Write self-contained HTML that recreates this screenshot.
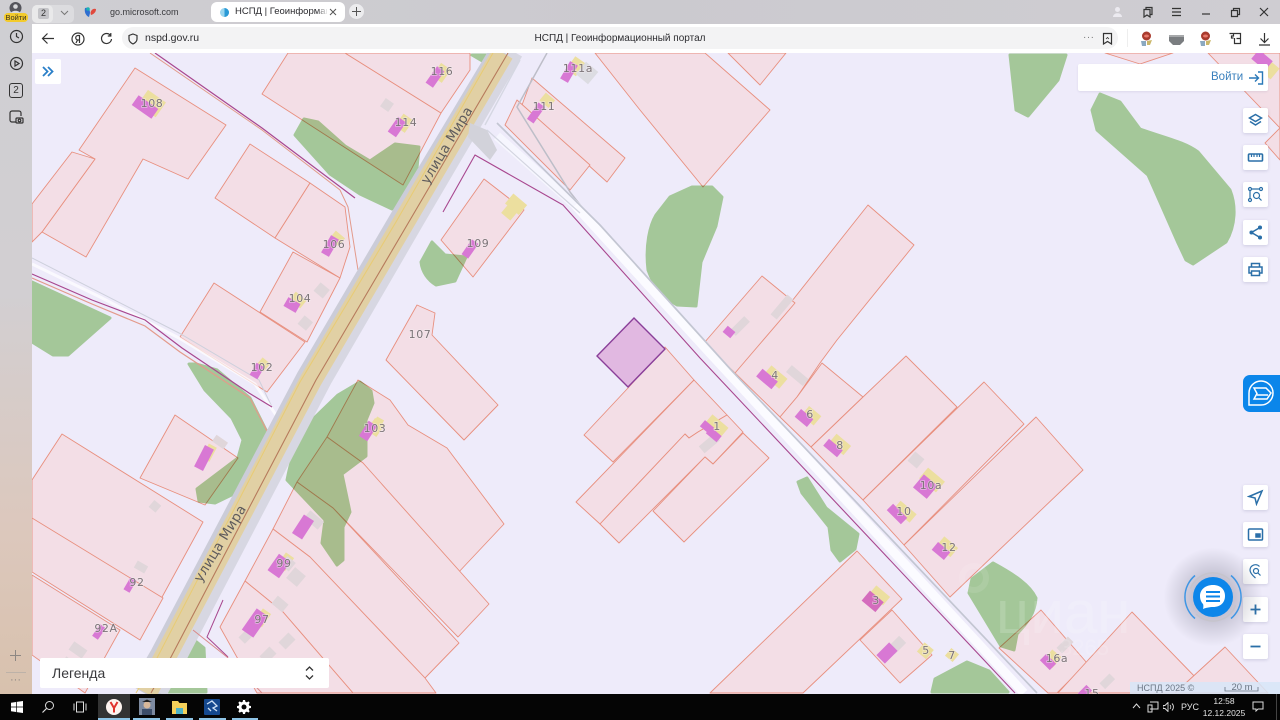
<!DOCTYPE html>
<html lang="ru"><head><meta charset="utf-8"><title>НСПД | Геоинформационный портал</title>
<style>
*{box-sizing:border-box}
html,body{margin:0;padding:0;width:1280px;height:720px;overflow:hidden;background:#eeebfa;font-family:"Liberation Sans","Noto Sans CJK SC",sans-serif}
.a{position:absolute}
.btn{position:absolute;left:1243px;width:25px;height:25px;background:#fff;border-radius:2px;box-shadow:0 1px 3px rgba(60,60,110,.18)}
.btn svg{position:absolute;left:4px;top:4px;width:17px;height:17px;fill:none;stroke:#2a6fa8;stroke-width:1.5}
.ic{position:absolute;fill:none;stroke:#333;stroke-width:1.2}
.lb text{font:11px "DejaVu Sans",sans-serif;fill:#7c7478;text-anchor:middle;letter-spacing:.6px;stroke:#f6eef2;stroke-width:1.5px;stroke-opacity:.55;paint-order:stroke}
.bar{position:absolute;top:718px;height:2px;background:#8ec4e6}
</style></head><body>

<svg class="a" style="left:32px;top:53px" width="1248" height="641" viewBox="32 53 1248 641">
<rect x="32" y="53" width="1248" height="641" fill="#eeebfa"/>

<g fill="#f3dee6" stroke="#e88f7e" stroke-width=".9" stroke-linejoin="round">
<polygon points="135,68 226,125 188,179 143,159 86,257 42,232 95,159 79,150"/>
<polygon points="32,204 72,152 95,159 42,232 32,242"/>
<polygon points="288,53 345,53 441,113 403,185 262,94"/>
<polygon points="345,53 470,53 470,70 441,113"/>
<polygon points="250,144 310,183 275,238 215,198"/>
<polygon points="310,183 345,207 350,247 340,278 275,238"/>
<polygon points="293,252 340,278 307,342 260,312"/>
<polygon points="214,283 305,342 267,392 180,337"/>
<polygon points="484,179 524,210 473,277 441,240"/>
<polygon points="417,305 435,313 432,335 498,405 464,440 386,360"/>
<polygon points="532,78 625,158 607,182 522,105"/>
<polygon points="517,100 590,165 570,190 505,125"/>
<polygon points="595,53 705,53 770,110 703,187 640,110"/>
<polygon points="728,53 786,53 760,85"/>
<polygon points="1105,53 1173,53 1140,64"/>
<polygon points="1208,53 1280,53 1280,128"/>
<polygon points="1280,128 1265,143 1280,160"/>
<polygon points="868,205 914,245 837,340 820,363 797,397 780,417 735,373"/>
<polygon points="762,276 795,303 735,373 704,343"/>
<polygon points="822,363 863,397 811,447 780,417 797,397"/>
<polygon points="906,356 957,407 863,500 811,447 863,397"/>
<polygon points="984,382 1024,424 904,545 863,500"/>
<polygon points="1036,417 1083,470 950,597 904,545"/>
<polygon points="857,551 902,599 803,693 710,693"/>
<polygon points="892,610 932,655 900,683 860,640"/>
<polygon points="1041,610 1087,663 1057,693 1048,693 999,648"/>
<polygon points="1132,612 1200,682 1192,693 1058,693"/>
<polygon points="1225,647 1268,693 1175,693"/>
<polygon points="665,347 694,380 613,462 584,435 628,388"/>
<polygon points="694,380 727,415 698,432 689,438 685,434 600,524 576,502"/>
<polygon points="727,415 743,432 713,464 705,457 619,543 600,524 685,434 689,438 698,432"/>
<polygon points="743,433 769,458 684,542 653,511 705,457 713,464"/>
<polygon points="62,434 203,522 155,610 32,520 32,480"/>
<polygon points="175,415 238,458 205,505 140,478"/>
<polygon points="32,518 163,598 140,640 32,572"/>
<polygon points="32,575 120,630 85,693 32,655"/>
<polygon points="358,380 390,400 408,425 447,448 504,524 456,575 363,463 327,437"/>
<polygon points="327,437 363,463 489,604 458,637 333,508 297,482"/>
<polygon points="297,482 333,508 459,643 425,678 310,557 273,529"/>
<polygon points="273,529 310,557 425,678 436,693 353,693 283,612 245,581"/>
<polygon points="245,581 283,612 353,693 257,693 220,627"/>
</g>

<g fill="#b0d89c" stroke="#b0d89c" stroke-width="3" stroke-linejoin="round" style="mix-blend-mode:multiply">
<polygon points="1010,55 1066,55 1058,80 1028,116 1016,110"/>
<path d="M1100 94 L1120 102 L1140 129 C1165 138 1185 142 1198 152 L1230 190 C1236 205 1236 225 1226 242 L1193 264 L1186 260 L1178 243 L1148 175 L1097 130 L1092 110Z"/>
<path d="M692 187 L712 187 L722 197 L716 226 L701 262 L696 306 L677 305 C665 298 655 290 648 270 C645 245 650 225 656 215 L670 197Z"/>
<path d="M432 242 L445 255 L466 257 L455 281 L436 285 C428 280 422 272 421 262Z"/>
<path d="M304 119 L318 122 L345 146 L370 161 L395 144 L419 147 L415 189 L392 209 L360 194 L330 174 L295 135Z"/>
<polygon points="32,282 110,318 68,355 53,355 32,342"/>
<path d="M189 364 L196 364 L217 370 L250 398 L267 432 L257 469 L246 488 L215 503 L199 501 L197 489 L238 458 L243 440 L232 418 L205 390Z"/>
<path d="M360 382 L371 391 L373 403 L366 420 L366 456 L342 474 L350 512 L343 527 L343 560 L337 565 L322 543 L325 520 L287 480 C292 455 298 435 309 423 L338 395Z"/>
<path d="M798 482 L807 478 L826 508 L858 534 L855 549 L840 561 L832 550 L829 527 L802 493Z"/>
<path d="M972 579 L993 563 C1015 575 1030 585 1036 598 C1035 615 1025 625 1017 634 L1014 650 L1001 646 L969 593Z"/>
<path d="M932 692 L935 679 L967 662 L989 671 L1008 692Z"/>
<path d="M179 658 L193 639 L204 648 L206 692 L162 692Z"/>
<polygon points="472,55 490,55 484,62"/>
</g>

<!-- purple lot -->
<polygon points="634,318 665,349 628,387 597,356" fill="#e1b8e1" stroke="#8a3f99" stroke-width="1.4"/>

<!-- upper left lines -->
<g fill="none">
<path d="M150 53 L262 130 L340 190 L348 207 L358 270" stroke="#e39a8b" stroke-width="1"/>
<path d="M155 53 L262 128 L355 198" stroke="#a8478f" stroke-width="1.2"/>
<path d="M32 258 L179 333 L259 380 L272 407" stroke="#cdd0dc" stroke-width="1"/>
<path d="M32 264 L100 297 L179 338 L255 384 L276 415" stroke="#fff" stroke-width="3" opacity=".7"/>
<path d="M32 274 L92 300 L145 320 L182 348 L249 393 L272 407" stroke="#a8478f" stroke-width="1.2"/>
<path d="M32 278 L92 304 L145 326 L180 352 L250 398 L270 437 L266 445" stroke="#e39a8b" stroke-width="1.2"/>
</g>

<!-- main road -->
<g fill="none">
<path d="M505 53 L405 220 L311 380 L165 657 L144 693" stroke="#cbccd8" stroke-width="31"/>
<path d="M516 53 L418 220 L325 380 L180 657 L160 693" stroke="#d7d7e2" stroke-width="14"/>
<path d="M503 53 L405 220 L311 380 L165 657 L146 693" stroke="#e1d0a4" stroke-width="22"/>
<path d="M493 53 L396 222 L300 382 L156 660 L136 693" stroke="#e8cb74" stroke-width="1"/>
<path d="M508 53 L410 220 L316 380 L171 657 L151 693" stroke="#b67a5c" stroke-width="1.1"/>
</g>
<polygon points="470,123 487,130 497,150 490,160 468,137" fill="#d2d2da"/>

<!-- diagonal service road -->
<g fill="none" stroke-linejoin="round">
<path d="M547 53 L517 107 L570 192 L592 220" stroke="#bdbec8" stroke-width="1.500"/>
<path d="M497 136 L575 205" stroke="#f6f6fe" stroke-width="9"/>
<path d="M575 205 L707 350 L1024 693" stroke="#fbfbff" stroke-width="9"/>
<path d="M487 130 L580 213" stroke="#d3d5e0" stroke-width="1.200"/>
<path d="M497 123 L600 225 L733 372 L1037 693" stroke="#c3c6d2" stroke-width="1.700"/>
<path d="M443 212 L475 155 L563 205 L700 358 L1015 693" stroke="#a8478f" stroke-width="1.100"/>
<path d="M520 60 L485 125" stroke="#d5d7e2" stroke-width="1.400"/>
<path d="M223 600 L207 637 L228 657" stroke="#a8478f" stroke-width="1"/>
<path d="M193 630 L227 657 L262 693" stroke="#d98a8a" stroke-width="1"/>
</g>

<!-- building footprints -->
<g fill="#ecdf9f">
<rect x="-10" y="-9" width="22" height="18" transform="translate(151,103) rotate(35)"/>
<rect x="-9" y="-6" width="16" height="12" transform="translate(442,72) rotate(-55)"/>
<rect x="-9" y="-6" width="15" height="12" transform="translate(405,122) rotate(-55)"/>
<rect x="-7" y="-5" width="12" height="10" transform="translate(548,101) rotate(40)"/>
<rect x="-9" y="-7" width="16" height="12" transform="translate(577,66) rotate(-55)"/>
<rect x="-7" y="-5" width="12" height="10" transform="translate(338,239) rotate(40)"/>
<rect x="-8" y="-7" width="18" height="13" transform="translate(515,204) rotate(40)"/>
<rect x="-7" y="-5" width="12" height="12" transform="translate(511,212) rotate(40)"/>
<rect x="-7" y="-5" width="14" height="10" transform="translate(298,300) rotate(40)"/>
<rect x="-6" y="-5" width="10" height="10" transform="translate(264,365) rotate(40)"/>
<rect x="-8" y="-6" width="15" height="12" transform="translate(376,427) rotate(-55)"/>
<rect x="-11" y="-6" width="21" height="11" transform="translate(717,426) rotate(40)"/>
<rect x="-11" y="-6" width="21" height="13" transform="translate(776,377) rotate(40)"/>
<rect x="-8" y="-5" width="16" height="12" transform="translate(812,415) rotate(40)"/>
<rect x="-10" y="-5" width="19" height="12" transform="translate(841,444) rotate(40)"/>
<rect x="-11" y="-7" width="22" height="14" transform="translate(932,480) rotate(40)"/>
<rect x="-10" y="-5" width="21" height="11" transform="translate(905,511) rotate(40)"/>
<rect x="-9" y="-5" width="18" height="12" transform="translate(948,546) rotate(40)"/>
<rect x="-9" y="-5" width="18" height="11" transform="translate(880,595) rotate(40)"/>
<rect x="-6" y="-5" width="12" height="12" transform="translate(926,650) rotate(40)"/>
<rect x="-5" y="-5" width="10" height="10" transform="translate(952,655) rotate(40)"/>
<rect x="-6" y="-6" width="12" height="14" transform="translate(1053,658) rotate(40)"/>
<rect x="-9" y="-5" width="16" height="9" transform="translate(210,452) rotate(-62)"/>
<rect x="-7" y="-5" width="14" height="8" transform="translate(378,425) rotate(-60)"/>
<rect x="-9" y="-5" width="16" height="10" transform="translate(286,561) rotate(-55)"/>
<rect x="-9" y="-5" width="16" height="10" transform="translate(263,617) rotate(-55)"/>
<rect x="-9" y="-5" width="16" height="14" transform="translate(1271,68) rotate(40)"/>
</g>
<g fill="#e0d6da">
<rect x="-5" y="-5" width="10" height="10" transform="translate(387,105) rotate(35)"/>
<rect x="-8" y="-8" width="16" height="16" fill="#dcdce2" transform="translate(587,73) rotate(40)"/>
<rect x="-10" y="-4" width="20" height="8" transform="translate(740,326) rotate(-45)"/>
<rect x="-13" y="-4" width="26" height="8" transform="translate(782,307) rotate(-50)"/>
<rect x="-11" y="-5" width="22" height="9" transform="translate(797,376) rotate(40)"/>
<rect x="-6" y="-6" width="12" height="12" transform="translate(916,460) rotate(40)"/>
<rect x="-10" y="-4" width="20" height="9" transform="translate(709,443) rotate(-40)"/>
<rect x="-6" y="-5" width="12" height="11" transform="translate(322,290) rotate(40)"/>
<rect x="-6" y="-5" width="11" height="11" transform="translate(306,323) rotate(40)"/>
<rect x="-7" y="-4" width="14" height="8" transform="translate(220,442) rotate(35)"/>
<rect x="-5" y="-5" width="9" height="9" transform="translate(155,507) rotate(40)"/>
<rect x="-6" y="-4" width="12" height="8" transform="translate(141,567) rotate(30)"/>
<rect x="-5" y="-9" width="10" height="18" transform="translate(314,520) rotate(-50)"/>
<rect x="-7" y="-7" width="14" height="14" transform="translate(296,577) rotate(40)"/>
<rect x="-5" y="-5" width="11" height="11" transform="translate(288,563) rotate(40)"/>
<rect x="-7" y="-5" width="14" height="10" transform="translate(280,604) rotate(40)"/>
<rect x="-7" y="-5" width="14" height="10" transform="translate(287,641) rotate(-45)"/>
<rect x="-7" y="-5" width="14" height="9" transform="translate(247,636) rotate(-45)"/>
<rect x="-7" y="-5" width="14" height="10" transform="translate(268,655) rotate(-45)"/>
<rect x="-8" y="-5" width="16" height="10" transform="translate(897,645) rotate(-45)"/>
<rect x="-8" y="-4" width="16" height="8" transform="translate(1065,645) rotate(-45)"/>
<rect x="-7" y="-5" width="14" height="8" transform="translate(1108,682) rotate(-45)"/>
<rect x="-8" y="-5" width="16" height="10" transform="translate(78,650) rotate(35)"/>
<rect x="-8" y="-5" width="16" height="10" transform="translate(70,665) rotate(35)"/>
</g>
<g fill="#d878d4">
<rect x="-12" y="-6" width="24" height="12" transform="translate(145,107) rotate(35)"/>
<rect x="-10" y="-4.5" width="20" height="9" transform="translate(435,77) rotate(-55)"/>
<rect x="-9" y="-5" width="18" height="10" transform="translate(397,127) rotate(-55)"/>
<rect x="-10" y="-4" width="20" height="8" transform="translate(536,113) rotate(-55)"/>
<rect x="-10" y="-4.5" width="20" height="9" transform="translate(569,72) rotate(-60)"/>
<rect x="-10" y="-4.5" width="20" height="9" transform="translate(330,246) rotate(-60)"/>
<rect x="-9" y="-4" width="18" height="8" transform="translate(470,249) rotate(-55)"/>
<rect x="-7" y="-5" width="14" height="10" transform="translate(292,305) rotate(30)"/>
<rect x="-7" y="-4.5" width="14" height="9" transform="translate(257,371) rotate(-60)"/>
<rect x="-9" y="-5" width="18" height="10" transform="translate(368,431) rotate(-57)"/>
<rect x="-6" y="-4" width="12" height="8" transform="translate(707,427) rotate(40)"/>
<rect x="-6" y="-4" width="14" height="8" transform="translate(713,434) rotate(40)"/>
<rect x="-5" y="-4" width="10" height="8" transform="translate(729,332) rotate(40)"/>
<rect x="-10" y="-5" width="20" height="10" transform="translate(767,379) rotate(40)"/>
<rect x="-8" y="-5" width="16" height="10" transform="translate(804,418) rotate(40)"/>
<rect x="-9" y="-4.5" width="18" height="9" transform="translate(833,448) rotate(40)"/>
<rect x="-9" y="-9" width="18" height="17" transform="translate(925,487) rotate(40)"/>
<rect x="-10" y="-4.5" width="20" height="9" transform="translate(897,514) rotate(45)"/>
<rect x="-8" y="-5" width="16" height="10" transform="translate(941,551) rotate(40)"/>
<rect x="-9" y="-6" width="18" height="13" fill="#d46cbd" transform="translate(873,601) rotate(40)"/>
<rect x="-9" y="-6" width="18" height="12" transform="translate(887,653) rotate(-45)"/>
<rect x="-7" y="-4.5" width="14" height="9" transform="translate(1048,662) rotate(45)"/>
<rect x="-12" y="-5" width="24" height="10" transform="translate(204,458) rotate(-63)"/>
<rect x="-11" y="-6" width="22" height="12" transform="translate(303,527) rotate(-57)"/>
<rect x="-10" y="-7" width="20" height="14" transform="translate(279,566) rotate(-55)"/>
<rect x="-13" y="-7" width="26" height="14" transform="translate(255,623) rotate(-55)"/>
<rect x="-7" y="-3.5" width="14" height="7" transform="translate(130,585) rotate(-60)"/>
<rect x="-7" y="-3.5" width="14" height="7" transform="translate(99,632) rotate(-55)"/>
<rect x="-9" y="-6" width="18" height="12" transform="translate(1262,60) rotate(40)"/>
<rect x="-6" y="-4" width="12" height="8" transform="translate(1085,692) rotate(-45)"/>
</g>

<g class="lb">
<text x="152" y="107">108</text><text x="442" y="75">116</text><text x="406" y="126">114</text>
<text x="544" y="110">111</text><text x="578" y="72">111а</text><text x="334" y="248">106</text>
<text x="478" y="247">109</text><text x="300" y="302">104</text><text x="262" y="371">102</text>
<text x="420" y="338">107</text><text x="375" y="432">103</text><text x="717" y="430">1</text>
<text x="775" y="379">4</text><text x="810" y="418">6</text><text x="840" y="449">8</text>
<text x="931" y="489">10а</text><text x="904" y="515">10</text><text x="949" y="551">12</text>
<text x="876" y="604">3</text><text x="926" y="654">5</text><text x="952" y="659">7</text>
<text x="1057" y="662">16а</text><text x="1092" y="697">15</text><text x="137" y="586">92</text>
<text x="106" y="632">92А</text><text x="284" y="567">99</text><text x="262" y="623">97</text>
</g>

<g font-family="DejaVu Sans,sans-serif" font-size="13.5" fill="#5e5b5c" letter-spacing=".3">
<text transform="translate(428,185) rotate(-59)">улица Мира</text>
<text transform="translate(201,583) rotate(-58.600)">улица Мира</text>
</g>

<text x="996" y="633" font-family="Liberation Sans,sans-serif" font-size="60" fill="#fff" opacity=".16">циан</text>
<text x="1060" y="655" font-family="Liberation Sans,sans-serif" font-size="22" fill="#fff" opacity=".14">3265</text>
<circle cx="974" cy="578" r="12" fill="none" stroke="#fff" stroke-width="6" opacity=".1"/>

<rect x="1130" y="682" width="150" height="12" fill="#d7e6f7" opacity=".85"/>
<text x="1137" y="691" font-family="Liberation Sans,sans-serif" font-size="9" fill="#6b7684">НСПД 2025 ©</text>
<text x="1242" y="690" text-anchor="middle" font-family="Liberation Sans,sans-serif" font-size="9.500" fill="#6b7684">20 m</text>
<path d="M1225 687 V691 H1258 V687" fill="none" stroke="#6b7684" stroke-width=".8"/>
</svg>

<!-- browser top -->
<div class="a" style="left:0;top:0;width:1280px;height:24px;background:linear-gradient(90deg,#cfced2,#cbcacf 50%,#cfcdd2)"></div>
<div class="a" style="left:32px;top:24px;width:1248px;height:29px;background:#fff"></div>
<div class="a" style="left:0;top:24px;width:32px;height:670px;background:linear-gradient(180deg,#cfcfd3 0%,#d2cfd2 40%,#dcc8bd 75%,#d8c1ad 100%)"></div>

<!-- profile -->
<svg class="a" style="left:8px;top:2px" width="15" height="13" viewBox="0 0 15 13"><circle cx="7.500" cy="6" r="6" fill="#55555c"/><circle cx="7.500" cy="4.500" r="2.300" fill="#d9d9dc"/><path d="M3 11c1-3 8-3 9 0" fill="#d9d9dc"/></svg>
<div class="a" style="left:4px;top:13px;width:24px;height:9px;border-radius:4px;background:#f3cb2c;font-size:7.500px;line-height:9px;text-align:center;color:#3a3220">Войти</div>

<!-- tabs -->
<div class="a" style="left:32px;top:5px;width:42px;height:18px;border-radius:5px;background:#dcdcdf"></div>
<div class="a" style="left:32px;top:5px;width:21px;height:18px;border-radius:5px;background:#e9e9ea"></div>
<div class="a" style="left:38px;top:8px;width:11px;height:11px;border-radius:2px;background:#c4c4c8;font-size:9px;line-height:11px;text-align:center;color:#333">2</div>
<svg class="a" style="left:60px;top:10px" width="9" height="6" viewBox="0 0 9 6"><path d="M1 1l3.500 3.500L8 1" fill="none" stroke="#777" stroke-width="1"/></svg>
<svg class="a" style="left:84px;top:6px" width="13" height="13" viewBox="0 0 13 13"><path d="M1 2c3-1 5 1 5 5l-1 4C2 10 0 6 1 2Z" fill="#2f6fd0"/><path d="M12 3C9 2 7 4 6.500 7l.5 2c3-1 5-3 5-6Z" fill="#e0493d"/><circle cx="4" cy="3" r="1.800" fill="#1bb3b3"/></svg>
<div class="a" style="left:110px;top:5px;font-size:9px;line-height:14px;color:#3a3a3e">go.microsoft.com</div>
<div class="a" style="left:211px;top:2px;width:134px;height:20px;border-radius:6px;background:#fff"></div>
<svg class="a" style="left:219px;top:7px" width="11" height="11" viewBox="0 0 11 11"><circle cx="5.500" cy="5.500" r="4.500" fill="#9ad5ee"/><path d="M5.500 1a4.500 4.500 0 0 1 0 9Z" fill="#2a9ad6"/></svg>
<div class="a" style="left:235px;top:5px;width:92px;overflow:hidden;white-space:nowrap;font-size:9.500px;line-height:14px;color:#2a2a2e">НСПД | Геоинформацион</div>
<div class="a" style="left:317px;top:4px;width:11px;height:16px;background:linear-gradient(90deg,rgba(255,255,255,0),#fff)"></div>
<svg class="a" style="left:329px;top:8px" width="8" height="8" viewBox="0 0 8 8"><path d="M1 1l6 6M7 1L1 7" stroke="#555" stroke-width="1"/></svg>
<div class="a" style="left:349px;top:4px;width:15px;height:15px;border-radius:50%;background:#ececee"></div>
<svg class="a" style="left:352px;top:7px" width="9" height="9" viewBox="0 0 9 9"><path d="M4.500 0v9M0 4.500h9" stroke="#555" stroke-width="1"/></svg>

<!-- window controls -->
<svg class="a" style="left:1112px;top:6px" width="11" height="12" viewBox="0 0 11 12"><circle cx="5.500" cy="3.500" r="2.500" fill="#eceaf0"/><path d="M1 11c0-5 9-5 9 0Z" fill="#eceaf0"/></svg>
<svg class="ic" style="left:1142px;top:6px" width="12" height="12" viewBox="0 0 12 12"><path d="M2 3.500h6v7.500l-3-2-3 2ZM4 3.500V1.500h6v7h-2"/></svg>
<svg class="ic" style="left:1171px;top:7px" width="11" height="10" viewBox="0 0 11 10"><path d="M1 1.500h9M1 5h9M1 8.500h9"/></svg>
<svg class="ic" style="left:1201px;top:12px" width="10" height="4" viewBox="0 0 10 4"><path d="M1 2h8"/></svg>
<svg class="ic" style="left:1230px;top:7px" width="11" height="11" viewBox="0 0 11 11"><path d="M1.500 3.500h6v6h-6ZM3.500 3.500v-2h6v6h-2"/></svg>
<svg class="ic" style="left:1259px;top:7px" width="10" height="10" viewBox="0 0 10 10"><path d="M1 1l8 8M9 1L1 9"/></svg>

<!-- sidebar icons -->
<svg class="ic" style="left:9px;top:29px" width="15" height="15" viewBox="0 0 15 15"><circle cx="7.500" cy="7.500" r="6"/><path d="M7.500 4v3.500l2.500 1.500"/></svg>
<svg class="ic" style="left:9px;top:56px" width="15" height="15" viewBox="0 0 15 15"><circle cx="7.500" cy="7.500" r="6"/><path d="M6 5v5l4-2.500Z"/></svg>
<div class="a" style="left:9px;top:83px;width:14px;height:15px;border:1.200px solid #333;border-radius:3px;font-size:10px;line-height:13px;text-align:center;color:#333">2</div>
<svg class="ic" style="left:9px;top:110px" width="15" height="15" viewBox="0 0 15 15"><path d="M7 12H3a2 2 0 0 1-2-2V3a2 2 0 0 1 2-2h7a2 2 0 0 1 2 2v3"/><rect x="7" y="8" width="7" height="5" rx="1"/><circle cx="10.500" cy="10.500" r="1.300"/></svg>
<svg class="a" style="left:10px;top:650px" width="11" height="11" viewBox="0 0 11 11"><path d="M5.500 0v11M0 5.500h11" stroke="#8d8783" stroke-width="1"/></svg>
<div class="a" style="left:6px;top:672px;width:20px;height:1px;background:#bdb2a8"></div>
<div class="a" style="left:10px;top:672px;font-size:11px;line-height:16px;color:#8d8783;letter-spacing:0">···</div>

<!-- toolbar -->
<svg class="ic" style="left:41px;top:32px" width="14" height="13" viewBox="0 0 14 13"><path d="M13 6.500H2M6.500 1.500l-5 5 5 5"/></svg>
<svg class="ic" style="left:71px;top:32px" width="14" height="14" viewBox="0 0 14 14"><circle cx="7" cy="7" r="6"/><path d="M8.500 11V3.500H7a2 2 0 0 0 0 4.500h1.500M6.500 8L5 11"/></svg>
<svg class="ic" style="left:100px;top:32px" width="13" height="13" viewBox="0 0 13 13"><path d="M10.500 3.500A5 5 0 1 0 11.500 7M10.800 1v3h-3"/></svg>
<div class="a" style="left:122px;top:27px;width:996px;height:22px;border-radius:11px;background:#f3f3f4"></div>
<svg class="ic" style="left:128px;top:33px" width="10" height="12" viewBox="0 0 10 12"><path d="M5 1l4 1.500V6c0 2.500-2 4-4 5-2-1-4-2.500-4-5V2.500Z"/></svg>
<div class="a" style="left:145px;top:31px;font-size:10.500px;line-height:15px;color:#2c2c30">nspd.gov.ru</div>
<div class="a" style="left:400px;top:31px;width:440px;text-align:center;font-size:10px;line-height:15px;color:#2c2c30">НСПД | Геоинформационный портал</div>
<div class="a" style="left:1083px;top:31px;font-size:10px;line-height:14px;color:#777;letter-spacing:.5px">···</div>
<svg class="ic" style="left:1102px;top:32px" width="11" height="13" viewBox="0 0 11 13"><path d="M1.500 1.500h8v10.500l-4-2.500-4 2.500Z"/><path d="M4 7l1.500-1.500L7 7" stroke-width=".8"/></svg>
<div class="a" style="left:1127px;top:29px;width:1px;height:18px;background:#eee"></div>
<svg class="a" style="left:1139px;top:31px" width="15" height="16" viewBox="0 0 15 16"><circle cx="7.500" cy="5" r="4.500" fill="#a93b2e"/><ellipse cx="7.500" cy="5" rx="2.500" ry="1.500" fill="#e8786a"/><path d="M2 10h5v5H3Z" fill="#8ba9c0"/><path d="M8 10l5-1-2 5H8Z" fill="#cbb76a"/></svg>
<svg class="a" style="left:1169px;top:35px" width="15" height="10" viewBox="0 0 15 10"><path d="M0 0h15v6l-4 4H4L0 6Z" fill="#7a7d80"/><path d="M0 0h15v2H0Z" fill="#a7a9ab"/></svg>
<svg class="a" style="left:1198px;top:31px" width="15" height="16" viewBox="0 0 15 16"><circle cx="7.500" cy="5" r="4.500" fill="#a93b2e"/><ellipse cx="7.500" cy="5" rx="2.500" ry="1.500" fill="#e8786a"/><path d="M2 10h5v5H3Z" fill="#8ba9c0"/><path d="M8 10l5-1-2 5H8Z" fill="#cbb76a"/></svg>
<svg class="ic" style="left:1228px;top:32px" width="14" height="13" viewBox="0 0 14 13"><path d="M1.500 1.500h4v2.500h-2v2h2M5.500 1.500h7v10h-6v-5.500M8.500 6.500h4"/></svg>
<svg class="ic" style="left:1258px;top:32px" width="13" height="14" viewBox="0 0 13 14"><path d="M6.500 1v9M2.500 6.500l4 4 4-4M1 13h11"/></svg>

<!-- expand button -->
<div class="a" style="left:35px;top:59px;width:26px;height:25px;background:#fff;border-radius:2px"></div>
<svg class="a" style="left:42px;top:66px" width="12" height="11" viewBox="0 0 12 11"><path d="M1 1l4.500 4.500L1 10M6 1l4.500 4.500L6 10" fill="none" stroke="#2a7fc8" stroke-width="1.800"/></svg>

<!-- login -->
<div class="a" style="left:1078px;top:64px;width:190px;height:27px;background:#fff;border-radius:2px;box-shadow:0 1px 2px rgba(60,60,110,.1)"></div>
<div class="a" style="left:1211px;top:70px;font-size:11.500px;line-height:15px;color:#3a80bd">Войти</div>
<svg class="a" style="left:1249px;top:71px" width="15" height="14" viewBox="0 0 15 14"><path d="M0 7h9M6 3.500L9.500 7 6 10.500M9 1h4.500v12H9" fill="none" stroke="#2a78b8" stroke-width="1.400"/></svg>

<!-- right tools -->
<div class="btn" style="top:108px"><svg viewBox="0 0 17 17"><path d="M8.500 2.500l6 3.500-6 3.500-6-3.500ZM3 9.500l5.500 3.500L14 9.500"/></svg></div>
<div class="btn" style="top:145px"><svg viewBox="0 0 17 17"><rect x="1.500" y="5" width="14" height="7" rx="1" stroke-width="1.600"/><path d="M4.500 5v3M7 5v3M10 5v3M12.500 5v3" stroke-width="1.200"/></svg></div>
<div class="btn" style="top:182px"><svg viewBox="0 0 17 17" style="stroke-width:1.200"><circle cx="3" cy="3" r="1.500"/><circle cx="14" cy="3" r="1.500"/><circle cx="3" cy="14" r="1.500"/><path d="M4.500 3h8M3 4.500v8"/><circle cx="9.500" cy="9.500" r="3"/><path d="M12 12l2.500 2.500"/></svg></div>
<div class="btn" style="top:220px"><svg viewBox="0 0 17 17"><path d="M13 3.500L4.500 8.500 13 13.500"/><circle cx="13" cy="3.500" r="1.300" fill="#2a6fa8"/><circle cx="4.500" cy="8.500" r="1.300" fill="#2a6fa8"/><circle cx="13" cy="13.500" r="1.300" fill="#2a6fa8"/></svg></div>
<div class="btn" style="top:257px"><svg viewBox="0 0 17 17"><path d="M4.500 6V2.500h8V6M4.500 12H2V6h13v6h-2.500M4.500 10h8v4.500h-8Z"/></svg></div>
<div class="btn" style="top:485px"><svg viewBox="0 0 17 17"><path d="M15 2L2 7.500l6 1.500 1.500 6Z"/></svg></div>
<div class="btn" style="top:522px"><svg viewBox="0 0 17 17"><rect x="1.500" y="3" width="14" height="11" rx="1"/><rect x="9" y="8" width="4" height="3" fill="#2a6fa8"/></svg></div>
<div class="btn" style="top:559px"><svg viewBox="0 0 17 17" style="stroke-width:1.200"><path d="M8.500 15C5 12 3 9.500 3 7a5.500 5.500 0 0 1 9.500-3.500"/><circle cx="9" cy="8" r="2.500"/><path d="M11 10l2.500 2.500"/></svg></div>
<div class="btn" style="top:597px"><svg viewBox="0 0 17 17" style="stroke-width:1.800"><path d="M8.500 3.500v10M3.500 8.500h10"/></svg></div>
<div class="btn" style="top:634px"><svg viewBox="0 0 17 17" style="stroke-width:1.800"><path d="M3.500 8.500h10"/></svg></div>

<!-- side chat tab -->
<div class="a" style="left:1243px;top:375px;width:37px;height:37px;background:#0b86ea;border-radius:7px 0 0 7px"></div>
<svg class="a" style="left:1247px;top:379px" width="29" height="29" viewBox="0 0 29 29"><path d="M2 14a12 12 0 1 1 12 12H2Z" fill="none" stroke="#fff" stroke-width="1.500"/><path d="M7 9h12l5 5-4 6H7l3-5.500Z" fill="none" stroke="#fff" stroke-width="1.500"/><path d="M10 16h11" stroke="#fff" stroke-width="1.500"/></svg>

<!-- chat widget -->
<div class="a" style="left:1163px;top:547px;width:100px;height:100px;border-radius:50%;background:radial-gradient(circle,rgba(90,90,110,.28) 30%,rgba(90,90,110,0) 70%)"></div>
<svg class="a" style="left:1175px;top:559px" width="76" height="76" viewBox="0 0 76 76">
<circle cx="38" cy="38" r="24" fill="none" stroke="#c6c4cc" stroke-width="1.500" stroke-dasharray="48 27.400" transform="rotate(20 38 38)"/>
<path d="M20 16.500A28 28 0 0 0 20 59.500" fill="none" stroke="#3f96e4" stroke-width="1.500"/>
<path d="M56 16.500A28 28 0 0 1 56 59.500" fill="none" stroke="#3f96e4" stroke-width="1.500"/>
<circle cx="38" cy="38" r="20" fill="#0d86ea"/>
<path d="M38 26c8 0 12 5 12 11s-4 11-12 11c-3 0-8 1-10 2 .5-2 .5-4 0-5-2-2-3-5-3-8 0-6 5-11 13-11Z" fill="#fff"/>
<path d="M31 33h14M31 37.500h14M31 42h14" stroke="#0d86ea" stroke-width="2"/>
</svg>

<!-- legend -->
<div class="a" style="left:40px;top:658px;width:289px;height:30px;background:#fff;border-radius:2px"></div>
<div class="a" style="left:52px;top:664px;font-size:14px;line-height:18px;color:#3a3a3d">Легенда</div>
<svg class="a" style="left:305px;top:666px" width="9" height="14" viewBox="0 0 9 14"><path d="M1 4.500l3.500-3.500 3.500 3.500M1 9.500l3.500 3.500 3.500-3.500" fill="none" stroke="#333" stroke-width="1.300"/></svg>

<!-- taskbar -->
<div class="a" style="left:0;top:694px;width:1280px;height:26px;background:#050505"></div>
<div class="a" style="left:98px;top:694px;width:32px;height:26px;background:#333"></div>
<svg class="a" style="left:11px;top:701px" width="12" height="12" viewBox="0 0 12 12"><path d="M0 1.700L5 1v4.600H0ZM5.700.9L12 0v5.600H5.700ZM0 6.400h5V11l-5-.7ZM5.700 6.400H12V12l-6.300-.9Z" fill="#fff"/></svg>
<svg class="a" style="left:41px;top:700px" width="14" height="14" viewBox="0 0 14 14"><circle cx="8.500" cy="5.500" r="4" fill="none" stroke="#ddd" stroke-width="1"/><path d="M5.500 8.500L1.500 12.500" stroke="#ddd" stroke-width="1.200"/></svg>
<svg class="a" style="left:73px;top:701px" width="14" height="12" viewBox="0 0 14 12"><path d="M3.500 1h7v10h-7ZM1 2.500v7M13 2.500v7" fill="none" stroke="#ddd" stroke-width="1"/></svg>
<svg class="a" style="left:106px;top:699px" width="16" height="16" viewBox="0 0 16 16"><circle cx="8" cy="8" r="8" fill="#fdf3ef"/><path d="M4.500 3l3.500 6v4.500M11.500 3L8 9" fill="none" stroke="#e0322d" stroke-width="2"/></svg>
<svg class="a" style="left:139px;top:698px" width="16" height="17" viewBox="0 0 16 17"><rect width="16" height="17" fill="#7d8aa0"/><circle cx="8" cy="7" r="3.500" fill="#d8b89a"/><path d="M3 4h10L8 1.500Z" fill="#222"/><rect x="3" y="11" width="10" height="6" fill="#3d4e6a"/></svg>
<svg class="a" style="left:172px;top:700px" width="15" height="14" viewBox="0 0 15 14"><path d="M0 1h6l1.500 2H15v11H0Z" fill="#f4d05a"/><rect x="4" y="8" width="7" height="6" fill="#4fb4c8"/></svg>
<svg class="a" style="left:204px;top:699px" width="16" height="16" viewBox="0 0 16 16"><rect width="16" height="16" rx="1" fill="#15488e"/><path d="M3 5l5-3 5 5-4 2 4 3M4 9l3 3" fill="none" stroke="#cfe1f6" stroke-width="1.300"/></svg>
<svg class="a" style="left:237px;top:700px" width="14" height="14" viewBox="0 0 14 14"><path d="M6 0h2l.4 1.800 1.500.6L11.400 1.400l1.300 1.300-1 1.500.6 1.500L14 6v2l-1.700.3-.6 1.500 1 1.500-1.300 1.300-1.500-1-1.500.6L8 14H6l-.3-1.700-1.500-.6-1.500 1-1.400-1.300 1-1.500-.6-1.500L0 8V6l1.700-.3.600-1.500-1-1.500 1.400-1.300 1.500 1 1.500-.6Z" fill="#fff"/><circle cx="7" cy="7" r="2.500" fill="#050505"/></svg>
<div class="bar" style="left:98px;width:32px"></div><div class="bar" style="left:133px;width:27px"></div><div class="bar" style="left:166px;width:27px"></div><div class="bar" style="left:199px;width:27px"></div><div class="bar" style="left:232px;width:26px"></div>

<svg class="a" style="left:1132px;top:703px" width="9" height="6" viewBox="0 0 9 6"><path d="M1 5l3.500-4L8 5" fill="none" stroke="#ddd" stroke-width="1"/></svg>
<svg class="a" style="left:1147px;top:701px" width="12" height="12" viewBox="0 0 12 12"><path d="M3 1h8v7H3M1 4h4v7H1Z" fill="none" stroke="#ddd" stroke-width="1"/></svg>
<svg class="a" style="left:1163px;top:702px" width="12" height="10" viewBox="0 0 12 10"><path d="M0 3.500h2l3-3v9l-3-3H0ZM7 3a3 3 0 0 1 0 4M9 1.500a5 5 0 0 1 0 7" fill="none" stroke="#ddd" stroke-width=".9"/></svg>
<div class="a" style="left:1181px;top:701px;font-size:9px;line-height:12px;color:#e2e2e2">РУС</div>
<div class="a" style="left:1202px;top:695px;width:44px;text-align:center;font-size:8.500px;line-height:12px;color:#e2e2e2">12:58<br>12.12.2025</div>
<svg class="a" style="left:1252px;top:701px" width="12" height="11" viewBox="0 0 12 11"><path d="M1 1h10v7H6L4 10V8H1Z" fill="none" stroke="#ddd" stroke-width="1"/></svg>
<div class="a" style="left:1276px;top:694px;width:1px;height:26px;background:#444"></div>
</body></html>
